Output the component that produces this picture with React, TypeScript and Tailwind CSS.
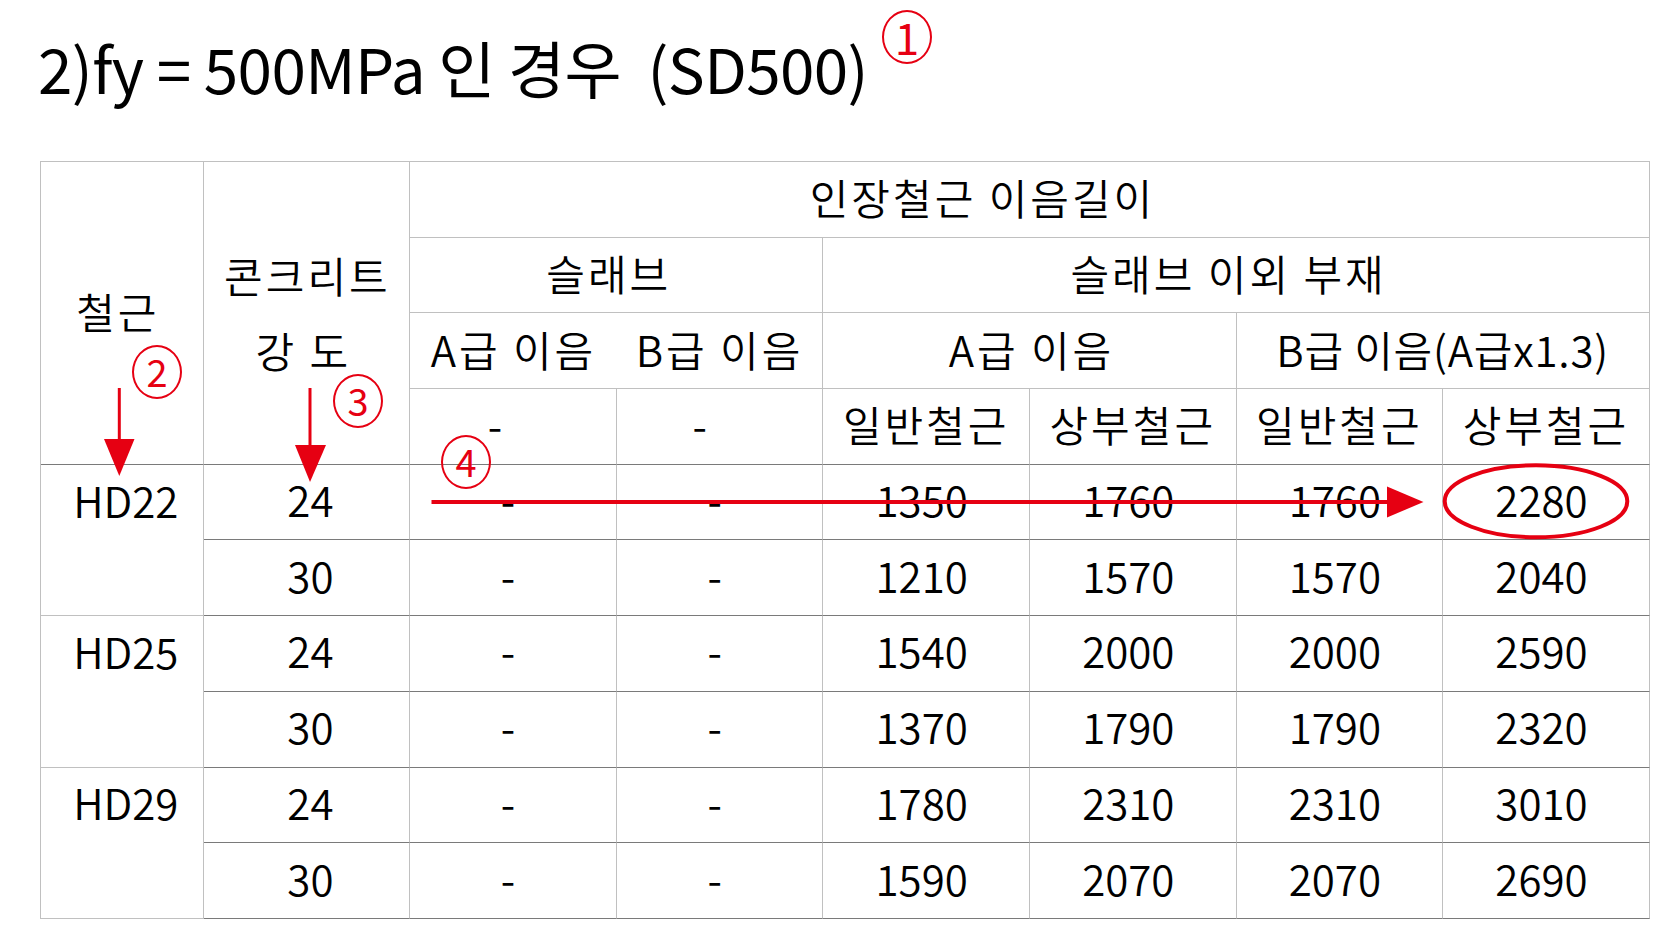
import React from "react";

const L = "border-[#c0c0c0]";

function Cell({
  children,
  className = "",
}: {
  children?: React.ReactNode;
  className?: string;
}) {
  return (
    <div
      className={
        "flex items-center justify-center border-r border-b leading-none whitespace-pre " +
        className
      }
    >
      {children}
    </div>
  );
}

function Circ({
  n,
  className = "",
  big = false,
}: {
  n: string;
  className?: string;
  big?: boolean;
}) {
  return (
    <span
      className={
        "inline-flex items-center justify-center w-[50px] h-[54px] rounded-[50%] border-2 border-[#e60012] text-[#e60012] leading-none pb-[3px] " +
        (big ? "text-[44px] " : "text-[38px] ") +
        className
      }
    >
      {n}
    </span>
  );
}

const data: { steel: string; rows: [string, string[]][] }[] = [
  {
    steel: "HD22",
    rows: [
      ["24", ["1350", "1760", "1760", "2280"]],
      ["30", ["1210", "1570", "1570", "2040"]],
    ],
  },
  {
    steel: "HD25",
    rows: [
      ["24", ["1540", "2000", "2000", "2590"]],
      ["30", ["1370", "1790", "1790", "2320"]],
    ],
  },
  {
    steel: "HD29",
    rows: [
      ["24", ["1780", "2310", "2310", "3010"]],
      ["30", ["1590", "2070", "2070", "2690"]],
    ],
  },
];

export default function App() {
  const D = "border-b-[#7a7a7a]";
  const K = "tracking-[3px]";
  return (
    <div className="relative w-[1675px] h-[942px] bg-white text-black font-['Noto_Sans_CJK_KR','Noto_Sans',sans-serif] overflow-hidden">
      {/* Title */}
      <div className="flex items-start h-[161px] pl-[38px] pt-[36px]">
        <h1 className="text-[62px] leading-none tracking-[-0.6px] whitespace-pre font-normal">
          2)fy = 500MPa 인 경우  (SD500)
        </h1>
        <Circ n="1" big className="ml-[14px] mt-[-26px]" />
      </div>

      {/* Table */}
      <div
        className={
          "ml-[40px] w-fit grid grid-cols-[162.6px_repeat(7,206.6px)] grid-rows-[repeat(10,75.7px)] border-l border-t text-[42px] font-[350] " +
          L
        }
      >
        <Cell className={"row-span-4 " + L + " " + D}>
          <span className={"pb-[4px] pr-[8px] " + K}>철근</span>
        </Cell>
        <Cell className={"row-span-4 flex-col gap-[33px] " + L + " " + D}>
          <span className={"pl-[2px] " + K}>콘크리트</span>
          <span className={"pr-[6px] " + K}>강 도</span>
        </Cell>
        <Cell className={"col-span-6 " + L}>
          <span className={"pb-[4px] pr-[94px] " + K}>인장철근 이음길이</span>
        </Cell>

        <Cell className={"col-span-2 " + L}>
          <span className={"pb-[4px] pr-[15px] " + K}>슬래브</span>
        </Cell>
        <Cell className={"col-span-4 " + L}>
          <span className={"pb-[4px] pr-[15px] " + K}>슬래브 이외 부재</span>
        </Cell>

        <Cell className={"border-r-0 " + L}>
          <span className={"pb-[4px] " + K}>A급 이음</span>
        </Cell>
        <Cell className={L}>
          <span className={"pb-[4px] " + K}>B급 이음</span>
        </Cell>
        <Cell className={"col-span-2 " + L}>
          <span className={"pb-[4px] pl-[4px] " + K}>A급 이음</span>
        </Cell>
        <Cell className={"col-span-2 " + L}>
          <span className="pb-[4px] tracking-[0.8px]">B급 이음(A급x1.3)</span>
        </Cell>

        <Cell className={L + " " + D}>
          <span className="pb-[4px] pr-[36px]">-</span>
        </Cell>
        <Cell className={L + " " + D}>
          <span className="pb-[4px] pr-[40px]">-</span>
        </Cell>
        {["일반철근", "상부철근", "일반철근", "상부철근"].map((t, i) => (
          <Cell key={i} className={L + " " + D}>
            <span className={"pb-[4px] " + K}>{t}</span>
          </Cell>
        ))}

        {data.map((g) => (
          <React.Fragment key={g.steel}>
            <div className={"row-span-2 border-r border-b " + L}>
              <div className="h-[75.7px] flex items-center justify-center leading-none pb-[6px] pl-[8px]">
                {g.steel}
              </div>
            </div>
            {g.rows.map(([c, vals], ri) => (
              <React.Fragment key={ri}>
                <Cell className={L + " " + D}>
                  <span className="pb-[6px] pl-[8px]">{c}</span>
                </Cell>
                <Cell className={L + " " + D}>
                  <span className="pb-[6px] pr-[10px]">-</span>
                </Cell>
                <Cell className={L + " " + D}>
                  <span className="pb-[6px] pr-[10px]">-</span>
                </Cell>
                {vals.map((v, vi) => (
                  <Cell key={vi} className={L + " " + D}>
                    <span className="pb-[6px] pr-[9px]">{v}</span>
                  </Cell>
                ))}
              </React.Fragment>
            ))}
          </React.Fragment>
        ))}
      </div>

      {/* Annotations overlay */}
      <svg
        className="absolute left-0 top-0 pointer-events-none"
        width="1675"
        height="942"
        viewBox="0 0 1675 942"
      >
        <line x1="119.3" y1="388" x2="119.3" y2="442" stroke="#e60012" strokeWidth="3" />
        <polygon points="104,439 134.5,439 119.3,476" fill="#e60012" />
        <line x1="310" y1="388" x2="310" y2="448" stroke="#e60012" strokeWidth="3" />
        <polygon points="295,445 326,445 310,482" fill="#e60012" />
        <line x1="431.5" y1="502" x2="1392" y2="502" stroke="#e60012" strokeWidth="4" />
        <polygon points="1387,486.5 1423.5,502 1387,517.5" fill="#e60012" />
        <ellipse cx="1536" cy="501.3" rx="91.3" ry="36" fill="none" stroke="#e60012" strokeWidth="4" />
      </svg>
      <Circ n="2" className="absolute left-[132px] top-[345px]" />
      <Circ n="3" className="absolute left-[333px] top-[374px]" />
      <Circ n="4" className="absolute left-[441px] top-[435px]" />
    </div>
  );
}
